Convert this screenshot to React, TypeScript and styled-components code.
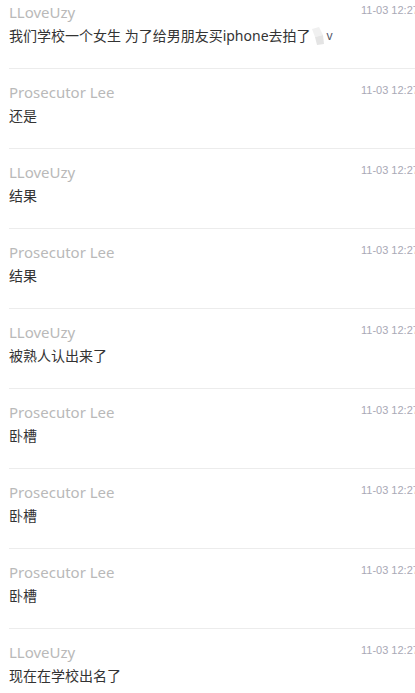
import styled, { createGlobalStyle } from "styled-components";

const GlobalStyle = createGlobalStyle`
  html, body {
    margin: 0;
    padding: 0;
    background: #fff;
    overflow-x: hidden;
  }
  body {
    font-family: "Noto Sans", "Noto Sans CJK SC", sans-serif;
  }
`;

interface IComment {
  name: string;
  time: string;
  text: string;
  emoji?: boolean;
}

const comments: IComment[] = [
  { name: "LLoveUzy", time: "11-03 12:27", text: "我们学校一个女生 为了给男朋友买iphone去拍了", emoji: true },
  { name: "Prosecutor Lee", time: "11-03 12:27", text: "还是" },
  { name: "LLoveUzy", time: "11-03 12:27", text: "结果" },
  { name: "Prosecutor Lee", time: "11-03 12:27", text: "结果" },
  { name: "LLoveUzy", time: "11-03 12:27", text: "被熟人认出来了" },
  { name: "Prosecutor Lee", time: "11-03 12:27", text: "卧槽" },
  { name: "Prosecutor Lee", time: "11-03 12:27", text: "卧槽" },
  { name: "Prosecutor Lee", time: "11-03 12:27", text: "卧槽" },
  { name: "LLoveUzy", time: "11-03 12:27", text: "现在在学校出名了" },
];

const List = styled.div`
  display: flex;
  flex-direction: column;
  gap: 11px;
  padding-left: 9px;
`;

const Item = styled.div`
  height: 68px;
  border-bottom: 1px solid #ececec;
  box-sizing: content-box;
`;

const Header = styled.div`
  display: flex;
  align-items: flex-start;
  padding-top: 2px;
`;

const Name = styled.span`
  flex: 1;
  font-size: 15px;
  line-height: 20px;
  color: #b9b9b9;
`;

const Time = styled.span`
  width: 54px;
  white-space: nowrap;
  font-family: "Liberation Sans", Arial, sans-serif;
  font-size: 11px;
  line-height: 14px;
  color: #a9a9b6;
  margin-top: 1px;
`;

const Text = styled.p`
  margin: 3px 0 0;
  font-size: 14px;
  line-height: 22px;
  color: #333;
  display: flex;
  align-items: center;
`;

const Emoji = styled.svg`
  width: 14px;
  height: 20px;
  margin: 0 2px 0 0;
`;

const Tail = styled.span`
  font-size: 12px;
  color: #556;
`;

export default function App() {
  return (
    <>
      <GlobalStyle />
      <List>
        {comments.map((c, i) => (
          <Item key={i}>
            <Header>
              <Name>{c.name}</Name>
              <Time>{c.time}</Time>
            </Header>
            <Text>
              {c.text}
              {c.emoji ? (
                <>
                  <Emoji viewBox="0 0 14 20">
                    <path d="M1 3 L8 1 L12 9 L4 11 Z" fill="#f0f0f0" />
                    <path d="M4 11 L12 9 L13 18 L6 19 Z" fill="#e4e4e4" />
                  </Emoji>
                  <Tail>v</Tail>
                </>
              ) : null}
            </Text>
          </Item>
        ))}
      </List>
    </>
  );
}
